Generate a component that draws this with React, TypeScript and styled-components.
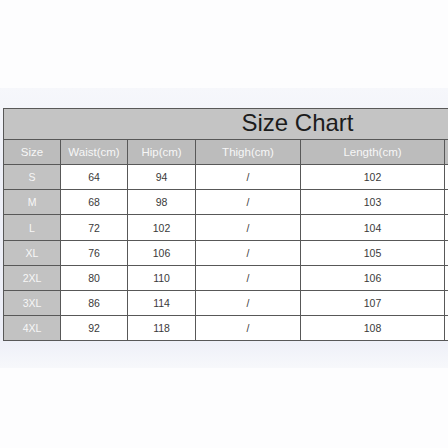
import React from "react";
import styled, { createGlobalStyle } from "styled-components";

const Global = createGlobalStyle`
  html, body {
    margin: 0;
    padding: 0;
    overflow: hidden;
    background: #ffffff;
    font-family: "Liberation Sans", Arial, sans-serif;
  }
`;

const Page = styled.div`
  width: 448px;
  height: 448px;
  padding-top: 88px;
  box-sizing: border-box;
  background: #fdfdfe;
  overflow: hidden;
`;

const Band = styled.div`
  padding: 20px 0 27px 3px;
  overflow: hidden;
  background: linear-gradient(
    to bottom,
    #f6f7fb 0%,
    #eef0f8 25%,
    #eceef7 88%,
    #f7f8fb 100%
  );
`;

const Grid = styled.div`
  display: grid;
  width: max-content;
  grid-template-columns: 57px 67px 68px 105px 144px 147px;
  grid-template-rows: 31px 25px 25px 25px 26px 25px 25px 25px 25px;
  border-top: 1px solid #585858;
  border-left: 1px solid #585858;
`;

const Cell = styled.div<{ $tone: "title" | "head" | "size" | "data" }>`
  box-sizing: border-box;
  border-right: 1px solid #585858;
  border-bottom: 1px solid #585858;
  display: flex;
  align-items: center;
  justify-content: center;
  font-size: ${(p) => (p.$tone === "head" ? "11.5px" : "10.5px")};
  color: ${(p) => (p.$tone === "data" ? "#3a3a3a" : "#f7f7f7")};
  background: ${(p) =>
    p.$tone === "data" ? "#ffffff" : p.$tone === "head" ? "#bcbcbc" : "#c2c2c2"};
`;

const Title = styled.div`
  grid-column: 1 / -1;
  box-sizing: border-box;
  border-right: 1px solid #585858;
  border-bottom: 1px solid #585858;
  background: #c4c4c4;
  display: flex;
  align-items: center;
  justify-content: center;
  padding-bottom: 2px;
  font-size: 24px;
  color: #1c1c1c;
`;

const headers = ["Size", "Waist(cm)", "Hip(cm)", "Thigh(cm)", "Length(cm)", ""];

const rows: [string, string, string, string, string][] = [
  ["S", "64", "94", "/", "102"],
  ["M", "68", "98", "/", "103"],
  ["L", "72", "102", "/", "104"],
  ["XL", "76", "106", "/", "105"],
  ["2XL", "80", "110", "/", "106"],
  ["3XL", "86", "114", "/", "107"],
  ["4XL", "92", "118", "/", "108"],
];

export default function App() {
  return (
    <>
      <Global />
      <Page>
        <Band>
          <Grid>
            <Title>Size Chart</Title>
            {headers.map((h, i) => (
              <Cell key={`h${i}`} $tone="head">
                {h}
              </Cell>
            ))}
            {rows.map((r) => (
              <React.Fragment key={r[0]}>
                <Cell $tone="size">{r[0]}</Cell>
                <Cell $tone="data">{r[1]}</Cell>
                <Cell $tone="data">{r[2]}</Cell>
                <Cell $tone="data">{r[3]}</Cell>
                <Cell $tone="data">{r[4]}</Cell>
                <Cell $tone="data"></Cell>
              </React.Fragment>
            ))}
          </Grid>
        </Band>
      </Page>
    </>
  );
}
